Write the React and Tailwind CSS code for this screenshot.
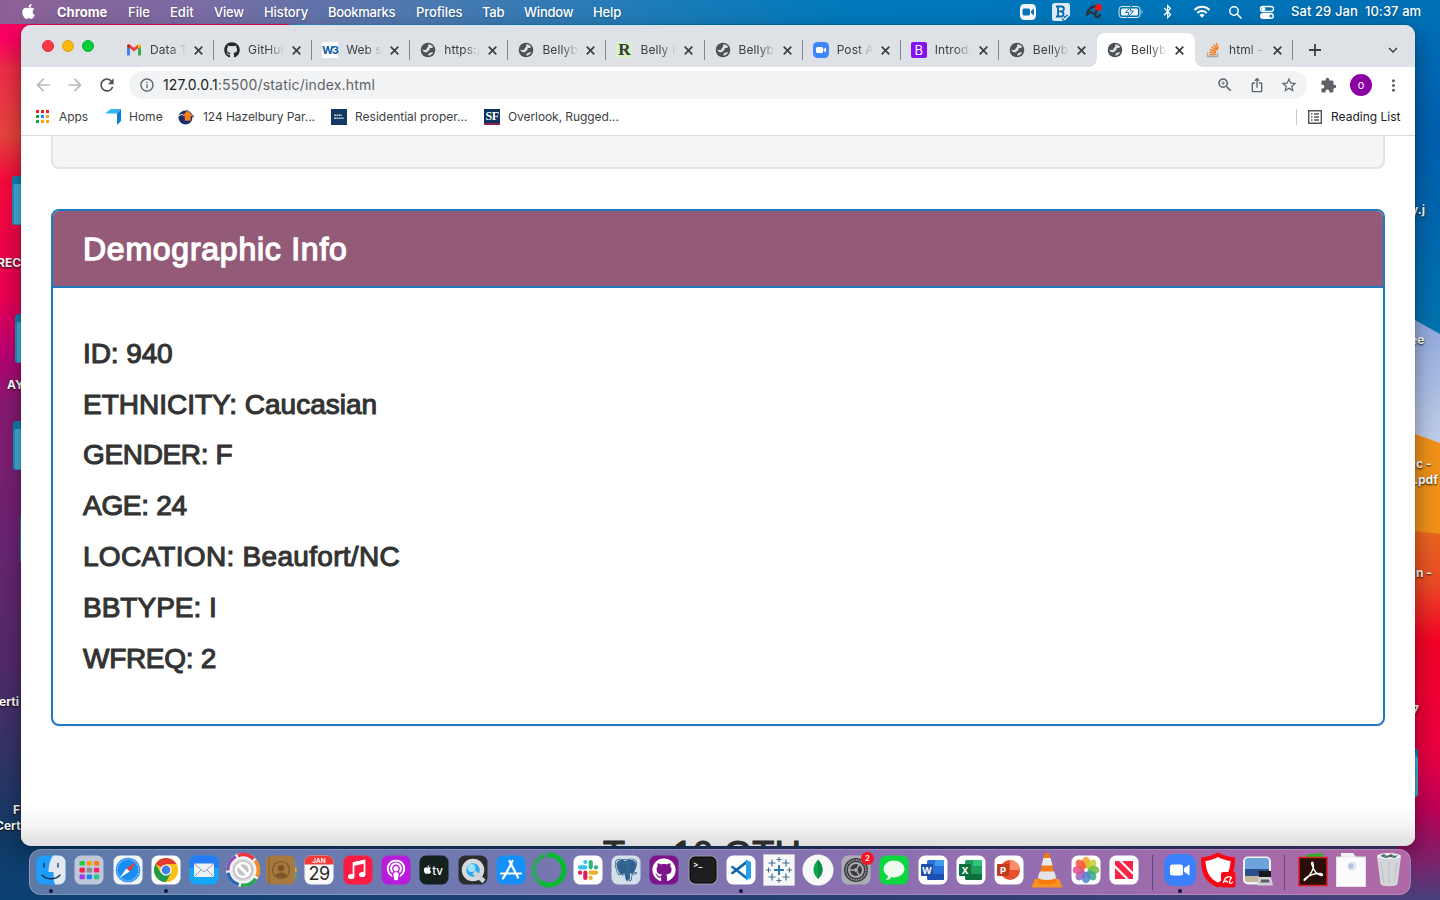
import React from "react";
import { FaApple, FaGithub, FaBluetoothB, FaPodcast } from "react-icons/fa";
import {
  MdArrowBack, MdArrowForward, MdRefresh, MdInfoOutline, MdZoomIn, MdIosShare,
  MdStarBorder, MdExtension, MdMoreVert, MdKeyboardArrowDown,
} from "react-icons/md";
import { SiPostgresql } from "react-icons/si";

/* ---------- Desktop ---------- */

function Wallpaper() {
  return (
    <svg className="absolute inset-0" width="1440" height="900" viewBox="0 0 1440 900">
      <defs>
        <linearGradient id="wl" x1="0" y1="0" x2="0" y2="1">
          <stop offset="0" stopColor="#f5005f" />
          <stop offset=".045" stopColor="#fb0062" />
          <stop offset=".075" stopColor="#ee2b48" />
          <stop offset=".15" stopColor="#e8443c" />
          <stop offset=".2" stopColor="#f50a3c" />
          <stop offset=".33" stopColor="#ea0052" />
          <stop offset=".39" stopColor="#bd0072" />
          <stop offset=".45" stopColor="#871a72" />
          <stop offset=".6" stopColor="#6b2473" />
          <stop offset=".73" stopColor="#54296b" />
          <stop offset=".84" stopColor="#333468" />
          <stop offset=".92" stopColor="#123a66" />
          <stop offset="1" stopColor="#0b4172" />
        </linearGradient>
        <linearGradient id="wr" x1="0" y1="0" x2="0" y2="1">
          <stop offset="0" stopColor="#0071b8" />
          <stop offset=".15" stopColor="#005fae" />
          <stop offset=".24" stopColor="#0066ae" />
          <stop offset=".37" stopColor="#0073ae" />
        </linearGradient>
        <linearGradient id="wk" x1="0" y1="0" x2="0" y2="1">
          <stop offset="0" stopColor="#8ba5dc" /><stop offset="1" stopColor="#c6d3ea" />
        </linearGradient>
        <linearGradient id="wred" x1="0" y1="0" x2="0" y2="1">
          <stop offset="0" stopColor="#e8681f" />
          <stop offset=".15" stopColor="#ec4a25" />
          <stop offset=".3" stopColor="#f30426" />
          <stop offset=".6" stopColor="#ea0040" />
          <stop offset=".75" stopColor="#c00056" />
          <stop offset=".88" stopColor="#841d68" />
          <stop offset="1" stopColor="#46407c" />
        </linearGradient>
        <linearGradient id="wb" x1="0" y1="0" x2="1" y2="0">
          <stop offset="0" stopColor="#0b4172" /><stop offset=".55" stopColor="#263f73" /><stop offset="1" stopColor="#46407c" />
        </linearGradient>
        <linearGradient id="wt" x1="0" y1="0" x2="1" y2="0">
          <stop offset="0" stopColor="#3393cb" /><stop offset="1" stopColor="#0071b8" />
        </linearGradient>
      </defs>
      <rect width="720" height="900" fill="url(#wl)" />
      <path d="M293 0H760V60H283Z" fill="url(#wt)" />
      <rect x="720" width="720" height="900" fill="url(#wr)" />
      <path d="M1380 308 1415 320 1440 334V460H1380Z" fill="url(#wk)" />
      <path d="M1380 425 1415 434 1440 443V560H1380Z" fill="#ef9018" />
      <path d="M1380 528 1415 531 1440 534V900H1380Z" fill="url(#wred)" />
      <rect x="21" y="840" width="1375" height="60" fill="url(#wb)" />
    </svg>
  );
}

function Folder({ className }) {
  return (
    <div className={"absolute h-[49px] w-[56px] rounded-[4px] bg-[#0c84b8] pt-[8px] " + className}>
      <div className="h-[41px] rounded-[3px] border-b border-l-2 border-[#2590c0] bg-[#43b0dc]" />
    </div>
  );
}

const labelCls = "absolute whitespace-pre text-[12px] leading-4 font-bold text-white [text-shadow:0_1px_2px_rgba(0,0,0,0.9)] ";

function DesktopItems() {
  return (
    <>
      <Folder className="left-[12px] top-[176px]" />
      <Folder className="left-[15px] top-[314px]" />
      <Folder className="left-[13px] top-[421px]" />
      <Folder className="left-[20px] top-[514px]" />
      <Folder className="left-[1362px] top-[748px]" />
      <span className={labelCls + "left-[-3px] top-[255px]"}>REC</span>
      <span className={labelCls + "left-[7px] top-[377px]"}>AY</span>
      <span className={labelCls + "left-[-1px] top-[694px]"}>erti</span>
      <span className={labelCls + "left-[13px] top-[802px]"}>F</span>
      <span className={labelCls + "left-[-5px] top-[818px]"}>Cert</span>
      <span className={labelCls + "left-[1411px] top-[202px]"}>y.j</span>
      <span className={labelCls + "left-[1410px] top-[332px]"}>ee</span>
      <span className={labelCls + "left-[1416px] top-[456px]"}>c -</span>
      <span className={labelCls + "left-[1414px] top-[472px]"}>.pdf</span>
      <span className={labelCls + "left-[1416px] top-[565px]"}>n -</span>
      <span className={labelCls + "left-[1412px] top-[702px]"}>7</span>
    </>
  );
}

/* ---------- Menu bar ---------- */

const menus = [
  ["File", "w-[42px] tracking-[0px]"],
  ["Edit", "w-[44px] tracking-[0px]"],
  ["View", "w-[50px] tracking-[-0.2px]"],
  ["History", "w-[64px] tracking-[-0.1px]"],
  ["Bookmarks", "w-[88px] tracking-[-0.3px]"],
  ["Profiles", "w-[66px] tracking-[-0.1px]"],
  ["Tab", "w-[42px] tracking-[-0.2px]"],
  ["Window", "w-[69px] tracking-[-0.2px]"],
  ["Help", "w-[40px] tracking-[-0.1px]"],
];

function MenuBar() {
  return (
    <header className="flex h-6 items-center bg-[linear-gradient(90deg,#8d6197_0px,#7a6ca4_200px,#4c79b0_420px,#1f7cb9_640px,#0079bb_850px,#0070b5_1440px)] pl-[21px] text-[13px] font-medium text-white [text-shadow:0_1px_2px_rgba(0,0,0,0.3)]">
      <FaApple className="-mt-px h-[17px] w-[15px] shrink-0" />
      <div className="flex pt-px">
        <span className="ml-[21px] w-[71px] font-bold tracking-[0px]">Chrome</span>
        {menus.map(([m, c]) => (
          <span key={m} className={"shrink-0 " + c}>{m}</span>
        ))}
      </div>
      <svg className="ml-auto shrink-0" width="262" height="24" viewBox="1019 0 262 24" fill="none">
        <rect x="1020" y="4" width="16" height="16" rx="4.500" fill="#f3f8fc" />
        <rect x="1022.500" y="8.500" width="7.500" height="7" rx="1.500" fill="#0b72b2" />
        <path d="M1031 11l3-2.500v7l-3-2.500Z" fill="#0b72b2" />
        <path d="M1054.500 3h13a2.500 2.500 0 0 1 2.500 2.500V16l-5 5h-10.500a2.500 2.500 0 0 1-2.500-2.500v-13A2.500 2.500 0 0 1 1054.500 3Z" fill="#dceaf5" />
        <path d="M1058 6.500v10M1056 6.500h5.500a2.400 2.400 0 0 1 0 4.800H1058M1061 11.500a2.500 2.500 0 0 1 0 5h-5" stroke="#0b6aa8" strokeWidth="1.800" />
        <path d="M1063 17.500l2 2 3.500-4" stroke="#0b6aa8" strokeWidth="4" />
        <path d="M1063 17.500l2 2 3.500-4" stroke="#e8f2fa" strokeWidth="1.400" />
        <path d="M1087 14.500c1-5 5-8.500 8-8M1087 14.500c2-3 5-3 6.500-.5M1098 8c-2 3-4 8-1.500 9 1.500.6 2.500-.5 3.500-2" stroke="#26323c" strokeWidth="2.400" strokeLinecap="round" />
        <circle cx="1098.500" cy="7.500" r="3.400" fill="#fa0d14" />
        <rect x="1119" y="6.500" width="21" height="11" rx="3" stroke="#d9ebf6" strokeWidth="1" />
        <rect x="1121" y="8.500" width="17" height="7" rx="1.500" fill="#eef6fb" />
        <path d="M1141.500 10v4c1.400-.5 1.400-3.500 0-4Z" fill="#b9d8ea" />
        <path d="M1131.500 6l-6 6.500h3.500l-1.500 5 6-6.500h-3.500Z" fill="#fff" stroke="#0873b5" />
        <FaBluetoothB x="1160" y="4" size="15" color="#fff" />
        <g stroke="#fff" strokeWidth="2">
          <path d="M1194.500 10a10.500 10.500 0 0 1 15 0M1197.300 13a6.500 6.500 0 0 1 9.400 0" />
          <path d="M1199.800 15l2.200 2.500 2.200-2.500a3.200 3.200 0 0 0-4.400 0Z" fill="#fff" strokeWidth=".5" />
        </g>
        <circle cx="1234" cy="11" r="4.200" stroke="#fff" strokeWidth="1.500" />
        <path d="M1237 14l4 4" stroke="#fff" strokeWidth="1.700" strokeLinecap="round" />
        <rect x="1260.500" y="6.500" width="13" height="5" rx="2.500" stroke="#fff" strokeWidth="1.300" />
        <circle cx="1263.500" cy="9" r="2" fill="#fff" />
        <rect x="1260" y="13" width="14" height="6" rx="3" fill="#fff" />
        <circle cx="1271" cy="16" r="1.600" fill="#0873b5" />
      </svg>
      <span className="ml-[10px] mr-[18px] w-[131px] shrink-0 whitespace-pre tracking-[0.08px]">{"Sat 29 Jan  10:37 am"}</span>
    </header>
  );
}

/* ---------- Browser ---------- */

const Globe = () => (
  <svg width="16" height="16" viewBox="0 0 16 16">
    <circle cx="8" cy="8" r="7.300" fill="#4d5156" />
    <path d="M8.500 2.200c1.800.1 3.500 1.100 4.500 2.600-.2 1.200-1.300 1.300-2.300 1.200-.9-.1-1.300.4-1.100 1.300.1.800-.4 1.300-1.200 1.400-1 .1-1 .9-.9 1.500H5.300C3.600 10 2.800 8.800 2.200 7.400c1.300.5 2.600.8 3.700.4.900-.4.500-1.400 1.200-2 .9-.6 1.500-1.400 1-2.200-.1-.5 0-1 .4-1.400ZM9.300 11.300c.9-.9 2.300-1 3.900-1.300-.8 2.100-2.500 3.500-4.800 3.700-.5-.7.100-1.600.9-2.400Z" fill="#dee1e6" />
  </svg>
);

function Gmail() {
  return (
    <svg width="16" height="16" viewBox="0 0 16 16">
      <path d="M1 13.500V4l3 2.300v7.200Z" fill="#4285f4" />
      <path d="M12 6.300 15 4v8.500a1 1 0 0 1-1 1h-2Z" fill="#34a853" />
      <path d="M4 6.300V2.800l4 3 4-3v3.500L8 9.500Z" fill="#ea4335" />
      <path d="M1 4.500V4c0-1.500 1.700-2.200 3-1.200V6.700Z" fill="#c5221f" />
      <path d="M15 4.500V4c0-1.500-1.700-2.200-3-1.200V6.700Z" fill="#fbbc04" />
    </svg>
  );
}

function StackOverflow() {
  return (
    <svg width="16" height="16" viewBox="0 0 16 16" fill="none" strokeWidth="1.300">
      <path d="M2.500 10.500v4h10v-4" stroke="#a5a9ad" />
      <g stroke="#f48024" strokeWidth="1.500">
        <path d="M4.300 12.500h6.500M4.400 10.100l6.400.7M5 7.500l6.200 1.700M6.300 4.800l5.600 3.200M8.600 2.600l4.200 4.900M11.300 1l2 5.500" />
      </g>
    </svg>
  );
}

const tabs = [
  { icon: <Gmail />, title: "Data T" },
  { icon: <FaGithub className="h-4 w-4 text-[#24292e]" />, title: "GitHub" },
  { icon: <span className="flex h-4 w-4 items-center justify-center bg-white pr-px text-[11px] leading-4 font-bold tracking-[-1.5px] text-[#0c5ba5]">W3</span>, title: "Web sc" },
  { icon: <Globe />, title: "https://" },
  { icon: <Globe />, title: "Bellybu" },
  { icon: <span className="flex h-4 w-4 items-center justify-center bg-[#d7f3c6] font-['Liberation_Serif',serif] text-[17px] leading-4 font-bold text-[#353c38]">R</span>, title: "Belly B" },
  { icon: <Globe />, title: "Bellybu" },
  {
    icon: (
      <svg width="16" height="16" viewBox="0 0 16 16"><rect width="16" height="16" rx="4.500" fill="#3e86fb" /><rect x="3" y="5" width="7" height="6" rx="1.500" fill="#fff" /><path d="M10.500 7.200 13 5.500v5l-2.500-1.700Z" fill="#fff" /></svg>
    ),
    title: "Post Al",
  },
  { icon: <span className="flex h-4 w-4 items-center justify-center rounded-[2px] bg-[#8512f5] text-[13px] leading-4 text-white">B</span>, title: "Introdu" },
  { icon: <Globe />, title: "Bellybu" },
  { icon: <Globe />, title: "Bellybu", active: true },
  { icon: <StackOverflow />, title: "html - t" },
];

function TabStrip() {
  return (
    <div className="flex h-[42px] bg-[#dee1e6]">
      <div className="flex w-[95px] shrink-0 gap-2 pl-[21px] pt-[15px]">
        <i className="h-3 w-3 rounded-full border border-[#e0243c] bg-[#fc3b47]" />
        <i className="h-3 w-3 rounded-full border border-[#dfa014] bg-[#fdb90a]" />
        <i className="h-3 w-3 rounded-full border border-[#0bb52f] bg-[#06cf3b]" />
      </div>
      {tabs.map((t, i) => (
        <div key={i} className={"relative mt-2 flex h-[34px] w-[98.100px] shrink-0 items-center pl-[10px] " + (t.active ? "rounded-t-lg bg-white" : "")}>
          {t.active && (
            <>
              <i className="absolute bottom-0 -left-2 h-2 w-2 bg-[radial-gradient(circle_at_0_0,#dee1e6_7.500px,#fff_8px)]" />
              <i className="absolute bottom-0 -right-2 h-2 w-2 bg-[radial-gradient(circle_at_100%_0,#dee1e6_7.500px,#fff_8px)]" />
            </>
          )}
          <span className="flex w-[24px] shrink-0 items-center">{t.icon}</span>
          <span className="h-5 w-[36px] overflow-hidden text-[12px] leading-5 tracking-[0.1px] whitespace-nowrap text-[#3c4043] [mask-image:linear-gradient(90deg,#000_55%,transparent_100%)]">{t.title}</span>
          <svg className="ml-[8px] shrink-0" width="9" height="9" viewBox="0 0 9 9">
            <path d="M.7.700l7.600 7.600M8.300.700.700 8.300" stroke="#3c4043" strokeWidth="1.700" />
          </svg>
          {!t.active && i !== 9 && <i className="absolute right-0 top-[7px] h-5 w-px bg-[#85888c]" />}
        </div>
      ))}
      <svg className="ml-[16px] mt-[19px] shrink-0" width="12" height="12" viewBox="0 0 12 12">
        <path d="M6 0v12M0 6h12" stroke="#3c4043" strokeWidth="1.800" />
      </svg>
      <MdKeyboardArrowDown className="ml-auto mr-[13px] mt-[16px] h-[18px] w-[18px] shrink-0 text-[#3c4043]" />
    </div>
  );
}

function Toolbar() {
  return (
    <div className="flex h-9 items-center bg-white pl-[12px] text-[#5f6368]">
      <MdArrowBack className="h-[20px] w-[20px] text-[#b9bbbe]" />
      <MdArrowForward className="ml-[12px] h-[20px] w-[20px] text-[#b9bbbe]" />
      <MdRefresh className="ml-[12px] h-[20px] w-[20px] text-[#50545a]" />
      <div className="ml-[12px] flex h-7 w-[1178px] items-center rounded-full bg-[#f1f3f4] pl-[10px] pr-[9px]">
        <MdInfoOutline className="h-4 w-4" />
        <span className="ml-2 text-[14px] leading-5 tracking-[0.18px]">
          <span className="text-[#202124]">127.0.0.1</span>:5500/static/index.html
        </span>
        <span className="ml-auto flex items-center gap-[15px]">
          <MdZoomIn className="h-[18px] w-[18px]" />
          <MdIosShare className="h-[16px] w-[16px]" />
          <MdStarBorder className="h-[18px] w-[18px]" />
        </span>
      </div>
      <MdExtension className="ml-[13px] h-[17px] w-[17px]" />
      <span className="ml-[13px] flex h-[22px] w-[22px] items-center justify-center rounded-full bg-[#8b00a3] text-[11px] leading-none text-white">o</span>
      <MdMoreVert className="ml-[12px] h-[19px] w-[19px]" />
    </div>
  );
}

function BookmarksBar() {
  const dots = ["#f0241c", "#f0241c", "#f0241c", "#18a05a", "#2a86f8", "#fba505", "#18a05a", "#fba505", "#fba505"];
  return (
    <div className="flex h-8 items-center bg-white pb-[4px] pl-[14px] text-[12px] text-[#3c4043]">
      <svg width="16" height="16" viewBox="0 0 16 16">
        {dots.map((c, i) => <rect key={i} x={1 + (i % 3) * 5} y={1 + Math.floor(i / 3) * 5} width="3" height="3" fill={c} />)}
      </svg>
      <span className="ml-2 w-[46px] tracking-[-0.05px]">Apps</span>
      <svg width="16" height="16" viewBox="0 0 16 16">
        <path d="M0 4.500 6 0h10l-4 4.500Z" fill="#2fb4f2" /><path d="M12 4.500 16 0v12l-4 4Z" fill="#0b7ed0" />
      </svg>
      <span className="ml-2 w-[49px]">Home</span>
      <svg width="17" height="16" viewBox="0 0 17 16">
        <circle cx="7.500" cy="8.500" r="7" fill="#1d2a70" /><path d="M1 7c3-3 6-2 12 3" stroke="#fff" fill="none" /><path d="M9.500 1 16 7.500H13V12H6.500V7.500H3.500Z" fill="#f5821f" stroke="#1d2a70" strokeWidth=".6" />
      </svg>
      <span className="ml-2 w-[128px] tracking-[-0.05px]">124 Hazelbury Par...</span>
      <svg width="16" height="16" viewBox="0 0 16 16">
        <rect width="16" height="16" fill="#123a63" /><path d="M3 6.200h8M3 9.200h10" stroke="#b6cadc" strokeWidth="1.500" strokeDasharray="2 .4" />
      </svg>
      <span className="ml-2 w-[129px]">Residential proper...</span>
      <span className="flex h-4 w-4 justify-center border-b-2 border-[#8c2346] bg-[#0c3360] font-['Liberation_Serif',serif] text-[12px] leading-[14px] font-bold tracking-[-0.5px] text-white">SF</span>
      <span className="ml-2 tracking-[-0.08px]">Overlook, Rugged...</span>
      <i className="ml-auto h-4 w-px bg-[#c9cbce]" />
      <svg className="ml-[11px]" width="14" height="14" viewBox="0 0 14 14" fill="none" stroke="#50545a" strokeWidth="1.400">
        <path d="M.7.700h12.600v12.600H.7Z" /><path d="M3 4h1.500M6 4h5M3 7h1.500M6 7h5M3 10h1.500M6 10h5" />
      </svg>
      <span className="ml-[9px] mr-[14px] w-[70px] whitespace-nowrap text-[#202124]">Reading List</span>
    </div>
  );
}

const facts = [
  ["ID: 940", "tracking-[-0.1px]"],
  ["ETHNICITY: Caucasian", "tracking-[0px]"],
  ["GENDER: F", "tracking-[-0.35px]"],
  ["AGE: 24", "tracking-[-0.3px]"],
  ["LOCATION: Beaufort/NC", "tracking-[0.3px]"],
  ["BBTYPE: I", "tracking-[0px]"],
  ["WFREQ: 2", "tracking-[-0.3px]"],
];

function Page() {
  return (
    <div className="relative h-[710px] overflow-hidden bg-white px-[30px] font-['Liberation_Sans',Arial,sans-serif] text-[#333]">
      <div className="h-[33px] rounded-b-[8px] border-2 border-t-0 border-[#e3e3e3] bg-[#f5f5f5]" />
      <section className="mt-10 h-[517px] overflow-hidden rounded-[8px] border-2 border-[#2278bf] shadow-[0_1px_2px_rgba(0,0,0,0.08)]">
        <h3 className="h-[77px] border-b-2 border-[#2278bf] bg-[#935b77] pt-px pl-[30px] text-[32px] leading-[75px] tracking-[0.75px] text-white [-webkit-text-stroke:1.300px_#fff]">Demographic Info</h3>
        <div className="pl-[30px] pt-[40.800px]">
          {facts.map(([f, c]) => (
            <h4 key={f} className={"h-[50.800px] text-[28px] leading-[50.800px] whitespace-nowrap [-webkit-text-stroke:1.100px_#333] " + c}>{f}</h4>
          ))}
        </div>
      </section>
      <h2 className="mt-[105px] pl-[552px] text-[36px] leading-[48px] tracking-[0.4px] whitespace-nowrap [-webkit-text-stroke:1.200px_#333]">Top 10 OTU</h2>
      <div className="absolute inset-x-0 bottom-0 h-[42px] bg-[linear-gradient(180deg,rgba(0,0,0,0),rgba(0,0,0,0.04)_50%,rgba(0,0,0,0.13))]" />
    </div>
  );
}

/* ---------- Dock ---------- */

const Tile = ({ fill = "#fff" }) => <rect x="-14.500" y="-14.500" width="29" height="29" rx="6.500" fill={fill} />;
const ring = (n) => Array.from({ length: n }, (_, i) => (i * 360) / n);

function Office({ letter, light, mid, dark, round }) {
  return (
    <>
      <Tile />
      {round ? (
        <>
          <circle cx="1" cy="0" r="10" fill={mid} /><path d="M1-10a10 10 0 0 1 10 10H1Z" fill={light} />
        </>
      ) : (
        <>
          <rect x="-6" y="-10" width="17" height="20" rx="1.500" fill={mid} />
          <path d="M2-10h8a1 1 0 0 1 1 1v5H2Z" fill={light} /><path d="M-6 4h17v5a1 1 0 0 1-1 1H-5Z" fill={dark} />
        </>
      )}
      <rect x="-12" y="-6" width="12" height="12" rx="1" fill={dark} />
      <text x="-6" y="3.500" textAnchor="middle" fontSize="9.500" fontWeight="700" fill="#fff">{letter}</text>
    </>
  );
}

const dockIcons = [
  { run: true, art: <><Tile fill="#1e9dfb" /><path d="M2-14.500h6a6.500 6.500 0 0 1 6.500 6.500v16a6.500 6.500 0 0 1-6.500 6.500H4C2.500 10 2.500 7 2.500 2H-2.500C-2.500-5-1-10 2-14.500Z" fill="#e3e9f2" /><path d="M-7-6.500v3.500M7-6.500v3.500M-9 5c4 5 14 5 18 0" stroke="#16324f" strokeWidth="1.300" fill="none" strokeLinecap="round" /></> },
  { art: <><Tile fill="#bfc7d9" />{["#28cc41", "#fd9f0b", "#fb7d14", "#f42040", "#8a8a90", "#fb1f6f", "#a438e8", "#1b83f8", "#22c98b"].map((c, i) => <rect key={c} x={-9.5 + (i % 3) * 7.2} y={-9 + Math.floor(i / 3) * 6.8} width="5.300" height="4.600" rx="1.200" fill={c} />)}</> },
  { art: <><Tile fill="#f3f4f6" /><circle r="12.300" fill="#1c8df0" /><circle r="10.800" fill="none" stroke="#bfe1fb" strokeWidth="1.500" strokeDasharray=".6 1" /><path d="M8.500-8 1.600 1.600-1.600-1.600Z" fill="#f53a34" /><path d="M-8.500 8-1.600-1.600 1.600 1.600Z" fill="#fff" /></> },
  { run: true, art: <><Tile /><circle r="12" fill="#fbc116" /><path d="M0 0-10.400-6A12 12 0 0 1 10.400-6Z" fill="#e33b2e" /><path d="M-10.400-6A12 12 0 0 0 0 12L5.200 3-5.200 3Z" fill="#219a4a" /><path d="M0 12A12 12 0 0 0 10.400-6H0L5.200 3Z" fill="#fbc116" /><circle r="5.600" fill="#fff" /><circle r="4.400" fill="#3f7fe8" /></> },
  { art: <><Tile fill="#12a6fc" /><path d="M-14.500-2h29v-6a6.500 6.500 0 0 0-6.500-6.500H-8A6.500 6.500 0 0 0-14.500-8Z" fill="#2b6bf5" opacity=".7" /><rect x="-10" y="-6.500" width="20" height="13.500" rx="1.500" fill="#eef1f4" /><path d="M-9.500-6 0 2 9.500-6M-9.500 6.500-3 0M9.500 6.500 3 0" stroke="#8d99a5" fill="none" strokeWidth=".9" /></> },
  { art: <><circle r="17" fill="#f4f4f6" />{["#ee3340", "#f68b1f", "#27a651", "#2a62b5", "#8854b5"].map((c, i) => <path key={c} d="M-8-13A15.300 15.300 0 0 1 8-13" transform={"rotate(" + (12 + i * 72) + ")"} stroke={c} strokeWidth="3.500" fill="none" />)}<circle r="10.500" fill="#c2c3c6" stroke="#dcdcde" strokeWidth="1.500" /><circle r="7" fill="none" stroke="#fff" strokeWidth="2.500" /><path d="M-5-5 5 5" stroke="#fff" strokeWidth="3" /></> },
  { art: <><path d="M12-9h3.500v5H12Z" fill="#4a90d0" /><path d="M12-3h3.500v5H12Z" fill="#f29c38" /><path d="M12 3h3.500v6H12Z" fill="#4fb25c" /><rect x="-15" y="-14.500" width="29" height="29" rx="5.500" fill="#a8793e" /><path d="M-12-14v28" stroke="#8b6330" /><circle r="8.500" fill="none" stroke="#7c5628" strokeWidth="1.200" /><circle cy="-2" r="3.200" fill="#7c5628" /><path d="M-5.500 5.500C-4 1.500 4 1.500 5.500 5.500 3 8.500-3 8.500-5.500 5.500Z" fill="#7c5628" /></> },
  { art: <><Tile fill="#fafafa" /><path d="M-14.500-5.500V-8A6.500 6.500 0 0 1-8-14.500H8A6.500 6.500 0 0 1 14.500-8v2.500Z" fill="#f23b38" /><text y="-7.500" textAnchor="middle" fontSize="6.500" fontWeight="600" fill="#fff">JAN</text><text y="9.500" textAnchor="middle" fontSize="18" letterSpacing="-.6" fill="#2b2b2d">29</text></> },
  { art: <><Tile fill="#fb1c44" /><path d="M-4.500 6V-7L6.500-9.500V4" stroke="#fff" strokeWidth="1.700" fill="none" /><path d="M-4.500-7.500 6.500-10v3.500l-11 2.500Z" fill="#fff" /><ellipse cx="-6.800" cy="6.500" rx="3.200" ry="2.600" fill="#fff" /><ellipse cx="4.200" cy="4.500" rx="3.200" ry="2.600" fill="#fff" /></> },
  { art: <><Tile fill="#b91ddb" /><FaPodcast x="-10.500" y="-10.500" size="21" color="#fff" /></> },
  { art: <><Tile fill="#14211f" /><FaApple x="-11.500" y="-5.500" size="10" color="#fff" /><text x="-1.800" y="4.500" fontSize="11.500" fontWeight="500" fill="#fff">tv</text></> },
  { art: <><Tile fill="#2d2d30" /><circle r="9" fill="#2aa7ee" stroke="#d6d9de" strokeWidth="4.500" /><circle cx="-1.500" cy="-2" r="4" fill="#9be2fb" /><path d="M1 2 11 11.500" stroke="#d0d3d8" strokeWidth="4.500" /></> },
  { art: <><Tile fill="#168ff8" /><path d="M1.500-9-6 5.500M-1.500-9 7 7.500M-10 3.500H10M-7 6.500-8 8.500" stroke="#fff" strokeWidth="2.200" strokeLinecap="round" fill="none" /></> },
  { art: <><path d="M0-15A15 15 0 1 1-8 12.700" fill="none" stroke="#06bb2f" strokeWidth="5" /><path d="M-8 12.700A15 15 0 0 1 0-15" fill="none" stroke="#10b838" strokeWidth="4.500" strokeDasharray="1.500 1 3 1.500" /></> },
  { art: <><Tile /><g strokeWidth="4.200" strokeLinecap="round"><path d="M-2.700-8v.1M-8-2.700h5.300" stroke="#36c5f0" /><path d="M2.700-8v5.300M8-2.700h-.1" stroke="#2eb67d" /><path d="M2.700 2.700H8M2.700 8v-.1" stroke="#ecb22e" /><path d="M-2.700 2.700V8M-8 2.700h.1" stroke="#e01e5a" /></g></> },
  { art: <><Tile fill="#d3dfe9" /><path d="M-9.500-7C-8-11-3-10.500-1-9 3-11 9-11 10-6.500 10.500-3 8.500 1 7 3.500H4V8c-.5 3-4 3-4.500 0L-1 3-6 4C-8 1-10-4-9.500-7Z" fill="#336791" /><SiPostgresql x="-11.500" y="-11.500" size="23" color="#275684" /></> },
  { art: <><Tile fill="#7d148c" /><FaGithub x="-12" y="-12" size="24" color="#fff" /></> },
  { art: <><Tile fill="#9fa1a4" /><rect x="-13" y="-13" width="26" height="26" rx="5" fill="#1d1e20" stroke="#000" /><text x="-10" y="-3" fontSize="8" fontWeight="600" fill="#fff">&gt;_</text></> },
  { run: true, art: <><Tile /><path d="M-10.500-3-8.500-4.500 6 6.500V10Z" fill="#0f70b7" /><path d="M-10.500 3-8.500 4.500 6-6.500V-10Z" fill="#0b62a4" /><path d="M5-10.500 10-8V8L5 10.500Z" fill="#27a0ec" /></> },
  { art: <><rect x="-15.500" y="-15.500" width="31" height="31" fill="#f7f7f8" stroke="#c8c8d0" /><g stroke="#3f7196" strokeWidth="1.200"><path d="M0-5V5M-5 0H5" stroke="#2f78a8" strokeWidth="2" />{ring(4).map((a) => <g key={a} transform={"rotate(" + a + ")"}><path d="M0-13v5M-2.500-10.500H2.500" strokeWidth="1" /><path d="M7-10.500v7M3.500-7h7" /></g>)}</g></> },
  { art: <><circle r="15.500" fill="#f7f8f7" /><path d="M0-10.500C6-4 6 3.500 0 9-6 3.500-6-4 0-10.500Z" fill="#11a44d" /><path d="M0-10.500C6-4 6 3.500 0 9Z" fill="#0d8a42" /></> },
  { badge: true, art: <><Tile fill="#a9adb3" /><circle r="12" fill="#3a3b3e" /><circle r="10" fill="none" stroke="#b5b7ba" strokeWidth="1.300" strokeDasharray="1 .8" /><circle r="7" fill="none" stroke="#a9abad" strokeWidth="2" /><circle r="2" fill="#a9abad" />{ring(3).map((a) => <path key={a} d="M0-2V-8" stroke="#a9abad" strokeWidth="1.500" transform={"rotate(" + (a + 30) + ")"} />)}</> },
  { art: <><Tile fill="#0ad83e" /><ellipse cy="-1" rx="10.500" ry="8.500" fill="#eef9ef" /><path d="M-6 5c0 3-1 4-2.500 5 3 0 5-1 6-3Z" fill="#eef9ef" /></> },
  { art: <Office letter="W" light="#3d9de8" mid="#2a6fd6" dark="#1c4fae" /> },
  { art: <Office letter="X" light="#34c481" mid="#1f9c5b" dark="#0f6f3c" /> },
  { art: <Office letter="P" light="#fc8f6b" mid="#e8502d" dark="#c23a1c" round /> },
  { art: <><path d="M-12 9h24l3.500 8.500h-31Z" fill="#f79420" /><path d="M-2-17h4L9.500 12.500C6 15-6 15-9.500 12.500Z" fill="#f67c12" /><path d="M-3.600-12h7.200l2 7.500H-5.600Z" fill="#e9e9ea" /><path d="M-7.300 1.500H7.300l2 6.500C5 10.500-5 10.500-9.300 8Z" fill="#e4e4e6" /></> },
  { art: <><Tile />{["#f7a01e", "#c7cf29", "#6dbb3f", "#35a88e", "#4a86cf", "#8e66bf", "#dd4f8c", "#f2553a"].map((c, i) => <ellipse key={c} cy="-7.500" rx="4.300" ry="5.800" fill={c} opacity=".85" transform={"rotate(" + i * 45 + ")"} />)}</> },
  { art: <><Tile /><rect x="-9" y="-9" width="18" height="18" fill="#fb2448" /><path d="M-9-9H-2L9 2V9H2L-9-2Z" fill="#fff" /><path d="M-9-9h4L9 5v4H5L-9-5Z" fill="#fb2448" /></> },
  null,
  { run: true, art: <><rect x="-16" y="-16" width="32" height="32" rx="9" fill="#3c80fb" /><rect x="-10" y="-5.500" width="13" height="11" rx="2.500" fill="#fff" /><path d="M4-1.800 9.500-5.500v11L4 1.800Z" fill="#fff" /></> },
  { art: <><path d="M-17-12.500C-10-13-5-15 0-17.500 5-15 10-13 17-12.500 17 2 14 12 0 17.500-14 12-17 2-17-12.500Z" fill="#fb0714" /><path d="M-12.500-9C-8-9.500-4-11 0-13 4-11 8-9.500 12.500-9 12 2 8 9 0 12.500-8 9-12 2-12.500-9Z" fill="#fff" /><rect x="3" y="2" width="14.500" height="15.500" rx="2" fill="#fb0714" /><path d="M5.500 12.500c.5-4 3.500-6.500 7-5.500M5.500 12.500c1-1.800 2.800-2 4-.5M13.500 7.500c-1.500 2-3 5-1.300 5.800 1 .4 1.800-.3 2.500-1.300" stroke="#fff" fill="none" strokeWidth="1.300" strokeLinecap="round" /></> },
  { art: <><rect x="-14" y="-13.500" width="28" height="28" rx="5" fill="#f1f3f5" /><path d="M-12-9a3 3 0 0 1 3-3H9a3 3 0 0 1 3 3V0H-12Z" fill="#6fa3dd" /><path d="M-12-1H12V6H-12Z" fill="#29508a" /><path d="M-12 6H12v4a2 2 0 0 1-2 2H-10a2 2 0 0 1-2-2Z" fill="#c6b79e" /><path d="M2 1h12v6H2Z" fill="#17181a" /><path d="M2 7h12l2 8.500H0Z" fill="#cfd2d6" /><path d="M4 9.500h8l.5 3h-9Z" fill="#5a5d62" /></> },
  null,
  { art: <><path d="M-7-13c0-4 5-3 6-2 2-3 6-1 5 0 2-3 7-3 6 1v3H-7Z" fill="#27b52a" /><rect x="-14" y="-12.500" width="28" height="28" fill="#2a0d08" stroke="#dd1f26" strokeWidth="1.500" /><path d="M-8 10C-3 6 2-2 0-7c-1-2-2 0-1 2C1 1 5 5 8.500 5.500c2 0 1-2-1.500-2C1 3.500-4 5-8 8.500-9.500 10-9 11-8 10Z" fill="none" stroke="#fff" strokeWidth="1.300" /></> },
  { art: <><path d="M-10-17H2l3 4v6h-15Z" fill="#f2f2f4" /><rect x="-14.500" y="-13" width="29" height="29.500" fill="#fcfcfd" stroke="#e3e3e7" /><circle cx="1" cy="-4" r="4.500" fill="#9cb4d2" opacity=".3" /><circle cx="0" cy="-4" r="2.500" fill="#5b85b4" opacity=".35" /></> },
  { art: <><path d="M-12-14H12L8.500 14c-1 3-16 3-17 0Z" fill="#d3d5d8" /><path d="M-8-8-5 13M0-8v22M8-8 5 13" stroke="#c3c6ca" strokeWidth="1.500" /><ellipse cy="-14" rx="12" ry="3" fill="#f2f3f4" /><path d="M-9-14l4-2 3 2 4-2 3 2 4-1-3 3-5-1-4 1Z" fill="#55606a" /><path d="M-5-14l2 1M3-13.500l2-1" stroke="#3c9a9b" strokeWidth="2" /></> },
];

function Dock() {
  return (
    <nav className="relative ml-[29px] mt-[3px] flex h-[46px] w-[1382px] rounded-[12px] border border-white/20 bg-[linear-gradient(90deg,#5b7aa8_0px,#6c7ab1_330px,#7b75b0_620px,#8a70b1_820px,#9b6cad_1100px,#b069a6_1380px)] pl-[1.800px]">
      {dockIcons.map((d, i) =>
        d === null ? (
          <span key={i} className="flex w-[17.700px] shrink-0 justify-center pt-[5px]">
            <i className="h-[35px] w-px bg-[#5d4680]" />
          </span>
        ) : (
          <span key={i} className="flex w-[38.340px] shrink-0 flex-col items-center pt-[2px]">
            <svg width="36" height="37" viewBox="-18 -18 36 37" className="shrink-0 overflow-visible">
              {d.art}
              {d.badge && (
                <g>
                  <circle cx="11.500" cy="-11.500" r="6.500" fill="#f8121f" />
                  <text x="11.500" y="-8.800" textAnchor="middle" fontSize="8" fontWeight="600" fill="#fff">2</text>
                </g>
              )}
            </svg>
            {d.run && <i className="h-1 w-1 shrink-0 rounded-full bg-[#15113c]" />}
          </span>
        )
      )}
    </nav>
  );
}

export default function App() {
  return (
    <div className="relative h-[900px] w-[1440px] overflow-hidden bg-[#0b4172] font-['Inter',sans-serif]">
      <Wallpaper />
      <DesktopItems />
      <div className="relative">
        <MenuBar />
        <main className="mt-px ml-[21px] h-[821px] w-[1394px] overflow-hidden rounded-[10px] bg-white shadow-[0_0_1px_rgba(0,0,0,0.5),0_8px_22px_rgba(0,0,0,0.4)]">
          <TabStrip />
          <Toolbar />
          <div className="border-b border-[#d8dadd]"><BookmarksBar /></div>
          <Page />
        </main>
        <Dock />
      </div>
    </div>
  );
}
